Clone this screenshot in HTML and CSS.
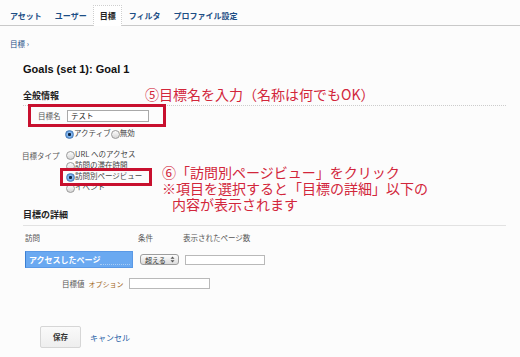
FILE: index.html
```html
<!DOCTYPE html>
<html lang="ja">
<head>
    <meta charset="UTF-8">
    <title>目標 - Goals (set 1): Goal 1</title>
    <link rel="stylesheet" href="styles.css">
</head>
<body>
    <div class="page">
        <div class="tabs">
            <span class="tab">アセット</span>
            <span class="tab">ユーザー</span>
            <span class="tab active">目標</span>
            <span class="tab">フィルタ</span>
            <span class="tab">プロファイル設定</span>
        </div>

        <div class="crumb">目標 ›</div>
        <h1 class="title">Goals (set 1): Goal 1</h1>

        <!-- 全般情報 -->
        <div class="section">
            <h2 class="section-head dotted">全般情報</h2>
            <div class="name-row">
                <span class="label name-label">目標名</span>
                <span class="field name-field">テスト</span>
            </div>
            <div class="status-row">
                <span class="radio on"></span><span class="opt">アクティブ</span>
                <span class="radio"></span><span class="opt">無効</span>
            </div>
            <div class="type-row">
                <span class="label type-label">目標タイプ</span>
                <div class="options">
                    <div class="option"><span class="radio"></span><span class="opt">URL へのアクセス</span></div>
                    <div class="option"><span class="radio"></span><span class="opt">訪問の滞在時間</span></div>
                    <div class="option"><span class="radio on"></span><span class="opt">訪問別ページビュー</span></div>
                    <div class="option"><span class="radio"></span><span class="opt">イベント</span></div>
                </div>
            </div>
        </div>

        <!-- 目標の詳細 -->
        <div class="section">
            <h2 class="section-head solid">目標の詳細</h2>
            <div class="detail-grid">
                <span class="label">訪問</span>
                <span class="label">条件</span>
                <span class="label">表示されたページ数</span>

                <div class="metric">アクセスしたページ</div>
                <div class="select">超える
                    <svg width="5" height="7" viewBox="0 0 5 7"><path d="M2.5 0.5 L4.5 2.8 H0.5 Z M2.5 6.5 L4.5 4.2 H0.5 Z" fill="#555"/></svg>
                </div>
                <span class="field count-field"></span>
            </div>
            <div class="value-row">
                <span class="label">目標値</span>
                <span class="optional">オプション</span>
                <span class="field value-field"></span>
            </div>
        </div>

        <div class="actions">
            <span class="save-btn">保存</span>
            <span class="cancel">キャンセル</span>
        </div>

        <!-- 注釈 -->
        <div class="mark mark-name"></div>
        <div class="mark mark-type"></div>
        <div class="note note-name">⑤目標名を入力（名称は何でもOK）</div>
        <div class="note note-type">
            <div class="note-line">⑥「訪問別ページビュー」をクリック</div>
            <div class="note-line">※項目を選択すると「目標の詳細」以下の</div>
            <div class="note-line indent">内容が表示されます</div>
        </div>
    </div>
</body>
</html>
```

FILE: styles.css
```css
:root {
    --link: #1c4e85;
    --label: #555;
    --note: #d2263b;
}

* {
    margin: 0;
    padding: 0;
    box-sizing: border-box;
}

body {
    font-family: "Noto Sans CJK JP", "Noto Sans", sans-serif;
    background: #fcfcfc;
    color: #333;
}

.page {
    position: relative;
    width: 520px;
    height: 357px;
    overflow: hidden;
}

/* tabs */
.tabs {
    display: flex;
    padding: 5px 0 0 3.5px;
    border-bottom: 1px solid #c9c9c9;
    height: 26px;
}

.tab {
    padding: 0 5.5px;
    font-size: 8px;
    font-weight: bold;
    line-height: 19px;
    color: var(--link);
    border: 1px solid transparent;
    border-bottom: none;
}

.tab.active {
    color: #222;
    background: #fff;
    border: 1px dotted #cfcfcf;
    border-bottom: none;
    height: 21px;
}

.crumb {
    margin-top: 13px;
    padding-left: 10px;
    font-size: 7.5px;
    line-height: 10px;
    color: var(--link);
}

.title {
    margin-top: 13px;
    padding-left: 23px;
    font-family: "Liberation Sans", Arial, sans-serif;
    font-size: 11px;
    line-height: 14px;
    font-weight: bold;
    color: #111;
}

.section {
    margin: 0 14px 0 23px;
}

.section-head {
    margin-top: 14px;
    font-size: 9px;
    line-height: 12px;
    font-weight: bold;
    color: #222;
    padding-bottom: 3px;
}

.section-head.dotted {
    border-bottom: 1px dotted #ccc;
}

.section-head.solid {
    margin-top: 15px;
    padding-bottom: 4px;
    border-bottom: 1px solid #e2e2e2;
}

.label {
    font-size: 7.5px;
    line-height: 10px;
    color: var(--label);
}

.field {
    display: inline-block;
    height: 11px;
    background: #fff;
    border: 1px solid #b9b9b9;
    font-size: 7.5px;
    line-height: 9px;
    padding-left: 3px;
    color: #222;
}

.name-row {
    display: flex;
    align-items: center;
    margin-top: 4px;
    padding-left: 15px;
    height: 12px;
}

.name-label {
    width: 29px;
}

.name-field {
    width: 82px;
    height: 12px;
    border-color: #a9a9a9;
}

.status-row {
    display: flex;
    align-items: center;
    margin-top: 7px;
    padding-left: 42px;
    height: 11px;
}

.radio {
    display: inline-block;
    width: 9px;
    height: 9px;
    border-radius: 50%;
    border: 1px solid #9a9a9a;
    background: linear-gradient(#fdfdfd, #d6d6d6);
    flex-shrink: 0;
}

.radio.on {
    border-color: #4f7fb6;
    background: radial-gradient(circle, #0d2440 0 1.3px, #8fbdf0 1.8px, #3f86d6 4.5px);
}

.opt {
    font-size: 7.5px;
    line-height: 10px;
    color: #444;
    margin-top: -3px;
}

.type-row {
    display: flex;
    margin-top: 10px;
}

.type-label {
    width: 43px;
    margin-left: -1px;
    line-height: 11px;
}

.options {
    display: flex;
    flex-direction: column;
}

.option {
    display: flex;
    align-items: center;
    height: 11px;
    margin-left: 1px;
}

/* detail table */
.detail-grid {
    display: grid;
    grid-template-columns: 113px 45px 1fr;
    grid-template-rows: 10px 17px;
    row-gap: 8px;
    margin-top: 7px;
    padding-left: 2px;
    align-items: center;
}

.metric {
    width: 108px;
    height: 17px;
    background: #6aa9f1;
    border: 1px solid #5a99e6;
    border-left-color: #3b7fd2;
    color: #fff;
    font-size: 8px;
    font-weight: bold;
    line-height: 15px;
    padding-left: 3px;
    position: relative;
}

.metric::after {
    content: '';
    position: absolute;
    left: 74px;
    right: 2px;
    bottom: 2px;
    border-bottom: 1px dotted #a8ccf6;
}

.select {
    display: flex;
    align-items: center;
    justify-content: space-between;
    width: 39px;
    height: 11px;
    margin-left: 2px;
    padding: 0 3px 0 4px;
    border: 1px solid #9d9d9d;
    border-radius: 3px;
    background: linear-gradient(#fdfdfd, #dcdcdc);
    font-size: 7px;
    color: #333;
}

.count-field {
    width: 80px;
    height: 10px;
    margin-left: 2px;
}

.value-row {
    display: flex;
    align-items: center;
    margin-top: 10px;
    padding-left: 39px;
    height: 11px;
}

.optional {
    margin-left: 4px;
    font-size: 7px;
    color: #a0661a;
}

.value-field {
    width: 81px;
    height: 11px;
    margin-left: 5px;
}

.actions {
    display: flex;
    align-items: center;
    margin-top: 37px;
    padding-left: 40px;
}

.save-btn {
    width: 41px;
    height: 22px;
    line-height: 20px;
    text-align: center;
    font-size: 7.5px;
    font-weight: bold;
    color: #333;
    background: linear-gradient(#fafafa, #eeeeee);
    border: 1px solid #d6d6d6;
    border-radius: 2px;
}

.cancel {
    margin-left: 9px;
    font-size: 8px;
    color: #1f5fa6;
}

/* annotations */
.mark {
    position: absolute;
    border: 3px solid #c8102e;
}

.mark-name {
    left: 28px;
    top: 104px;
    width: 138px;
    height: 23px;
}

.mark-type {
    left: 60px;
    top: 168px;
    width: 92px;
    height: 18px;
}

.note {
    position: absolute;
    color: var(--note);
    font-size: 14px;
    line-height: 16px;
    white-space: nowrap;
}

.note-line {
    height: 16px;
}

.note-name {
    left: 145px;
    top: 86px;
}

.note-type {
    left: 162px;
    top: 164px;
}

.indent {
    padding-left: 10px;
}
```
